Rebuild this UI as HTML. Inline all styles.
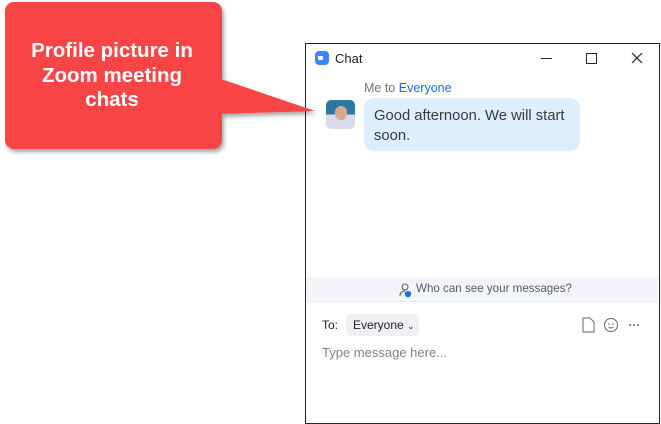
<!DOCTYPE html><html><head><style>
body{margin:0;width:661px;height:424px;background:#fff;position:relative;overflow:hidden;font-family:"Liberation Sans",sans-serif}
.a{position:absolute}
</style></head><body>
<div class="a" style="left:305px;top:43px;width:353px;height:379px;border:1px solid #222;background:#fff"></div>
<svg class="a" style="left:0;top:0;z-index:2" width="330" height="160">
<defs><filter id="s" x="-10%" y="-10%" width="130%" height="130%"><feDropShadow dx="2" dy="3" stdDeviation="2" flood-color="#000" flood-opacity="0.35"/></filter></defs>
<g filter="url(#s)" fill="#fa4546">
<rect x="5" y="2" width="217" height="147" rx="9"/>
<polygon points="218,78 315,111 218,114"/>
</g>
<text x="112" y="57" text-anchor="middle" fill="#fff" font-weight="bold" font-size="20.5">Profile picture in</text>
<text x="112" y="82" text-anchor="middle" fill="#fff" font-weight="bold" font-size="20.5">Zoom meeting</text>
<text x="112" y="106" text-anchor="middle" fill="#fff" font-weight="bold" font-size="20.5">chats</text>
</svg>
<div class="a" style="left:315px;top:51px;width:14px;height:14px;border-radius:4px;background:#3a85f7"></div>
<div class="a" style="left:318px;top:56px;width:5px;height:4px;background:#fff;border-radius:1px"></div>
<div class="a" style="left:335px;top:51px;font-size:13px;color:#222">Chat</div>
<div class="a" style="left:541px;top:58px;width:11px;height:1px;background:#222"></div>
<div class="a" style="left:586px;top:53px;width:9px;height:9px;border:1px solid #222"></div>
<svg class="a" style="left:631px;top:52px" width="12" height="12"><path d="M1 1L11 11M11 1L1 11" stroke="#222" stroke-width="1.2"/></svg>
<div class="a" style="left:364px;top:81px;font-size:12.5px;color:#6e7380">Me to <span style="color:#1a6ee6">Everyone</span></div>
<div class="a" style="left:326px;top:100px;width:29px;height:29px;border-radius:5px;background:linear-gradient(#2c78a0 50%,#d8dce8 50%)"><div style="margin:6px auto 0;width:12px;height:14px;border-radius:6px;background:#d9a890"></div></div>
<div class="a" style="left:364px;top:98px;width:216px;height:53px;border-radius:10px;background:#ddeefc"></div>
<div class="a" style="left:374px;top:106px;font-size:14.8px;line-height:20px;color:#3a3a40">Good afternoon. We will start<br>soon.</div>
<div class="a" style="left:306px;top:277px;width:352px;height:24px;background:#f4f5f9;border-bottom:1px solid #e6e7ec"></div>
<svg class="a" style="left:398px;top:282px" width="16" height="16"><circle cx="7" cy="5" r="3" fill="none" stroke="#555" stroke-width="1"/><path d="M2 14c0-4 3-5 5-5" fill="none" stroke="#555"/><path d="M10 9l3 1v2c0 2-1.5 3-3 3.5c-1.5-.5-3-1.5-3-3.5v-2z" fill="#1a6ee6"/></svg>
<div class="a" style="left:416px;top:282px;font-size:11.6px;color:#555a66">Who can see your messages?</div>
<div class="a" style="left:322px;top:318px;font-size:12px;color:#222">To:</div>
<div class="a" style="left:346px;top:314px;width:73px;height:22px;border-radius:5px;background:#eff0f4"></div>
<div class="a" style="left:353px;top:318px;font-size:12px;color:#222">Everyone <span style="font-size:9px">⌄</span></div>
<svg class="a" style="left:581px;top:316px" width="60" height="18"><path d="M2 2h7l4 4v10H2z" fill="none" stroke="#666" stroke-width="1"/><circle cx="30" cy="9" r="6.5" fill="none" stroke="#666"/><circle cx="28" cy="8" r=".8" fill="#666"/><circle cx="32" cy="8" r=".8" fill="#666"/><path d="M27.5 11q2.5 2 5 0" stroke="#666" fill="none"/><circle cx="49" cy="9" r="1" fill="#666"/><circle cx="53" cy="9" r="1" fill="#666"/><circle cx="57" cy="9" r="1" fill="#666"/></svg>
<div class="a" style="left:322px;top:345px;font-size:13px;color:#80808c">Type message here...</div>
</body></html>
